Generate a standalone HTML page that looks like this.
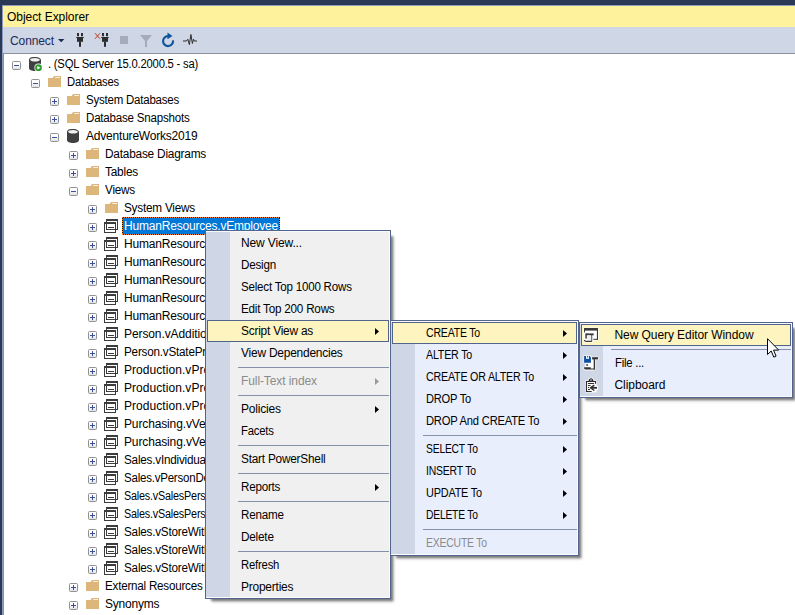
<!DOCTYPE html>
<html><head><meta charset="utf-8"><title>Object Explorer</title><style>
html,body{margin:0;padding:0;width:795px;height:615px;overflow:hidden;background:#fff}
body{position:relative;font-family:"Liberation Sans", sans-serif;font-size:12px}
body>div,body>span,body>svg{position:absolute;display:block}
.t{white-space:pre;line-height:18px;height:18px;transform-origin:0 0}
.menu{box-shadow:4px 4px 2px -2px rgba(0,0,0,0.4), 5px 5px 3px -2px rgba(0,0,0,0.2)}
</style></head>
<body>
<div style="left:0px;top:0px;width:795px;height:5px;background:#293955;"></div>
<div style="left:0px;top:0px;width:2px;height:615px;background:#293955;"></div>
<div style="left:2px;top:5px;width:1px;height:610px;background:#8e9bbc;"></div>
<div style="left:2px;top:5px;width:793px;height:1px;background:#8e9bbc;"></div>
<div style="left:3px;top:6px;width:792px;height:21px;background:#fff29d;"></div>
<div style="left:3px;top:27px;width:792px;height:26px;background:#cfd6e5;"></div>
<div style="left:3px;top:53px;width:792px;height:1px;background:#8c909c;"></div>
<div style="left:3px;top:53px;width:1px;height:562px;background:#8c909c;"></div>
<span class="t" style="left:7px;top:8px;color:#000;font-size:12px;letter-spacing:-0.047px;">Object Explorer</span>
<span class="t" style="left:10px;top:32px;color:#1b2a5c;font-size:12px;letter-spacing:-0.100px;">Connect</span>
<svg style="left:56px;top:27px" width="150" height="26" viewBox="0 0 150 26"><path d="M2 12h6.400l-3.200 3.200z" fill="#1b2a4c"/><g fill="#2d2d2d" transform="translate(0 0)"><rect x="21" y="6" width="2" height="3.200"/><rect x="25" y="6" width="2" height="3.200"/><path d="M20 11l0.500-1h7l0.500 1z"/><rect x="21" y="11" width="6" height="3.800"/><rect x="23" y="14.500" width="2" height="5.300"/></g><g fill="#2d2d2d" transform="translate(25 0)"><rect x="21" y="6" width="2" height="3.200"/><rect x="25" y="6" width="2" height="3.200"/><path d="M20 11l0.500-1h7l0.500 1z"/><rect x="21" y="11" width="6" height="3.800"/><rect x="23" y="14.500" width="2" height="5.300"/></g><path d="M39 6.200l5 5.600M44 6.200l-5 5.600" stroke="#c2391d" stroke-width="1" fill="none"/><rect x="64" y="9" width="8" height="8" fill="#a6abba"/><path d="M84 8h12l-5 6v6h-2v-6z" fill="#a6abba"/><path d="M112 9.100A5 5 0 1 0 117 13.300" stroke="#0e569c" stroke-width="2.100" fill="none"/><path d="M111.500 5.400l5 3.700l-5 3.200z" fill="#0e569c"/><path d="M127 14h3.500l1.300-1.800l1.600 5.400l1.500-10.100l1.500 9l1.100-4.300l0.900 1.800h2.600" stroke="#2d2d2d" stroke-width="1" fill="none"/></svg>
<div id="tree" style="left:4px;top:54px;width:791px;height:561px;overflow:hidden;background:#fff"></div>
<svg class="i" style="left:12px;top:61px" width="9" height="9" viewBox="0 0 9 9"><rect x="0.500" y="0.500" width="8" height="8" rx="1" fill="#fdfdfd" stroke="#919191"/><rect x="1" y="5" width="7" height="1.500" fill="#efefef"/><rect x="1" y="6.500" width="7" height="1.500" fill="#e3e3e3"/><path d="M2 4.500h5" stroke="#3b4f9e" stroke-width="1"/></svg>
<svg class="i" style="left:29px;top:57px" width="16" height="15" viewBox="0 0 16 15"><path d="M0 2.800v8.400c0 1.500 2.700 2.800 6 2.800s6-1.300 6-2.800v-8.400z" fill="#404040"/><ellipse cx="6" cy="2.800" rx="5.400" ry="2.300" fill="#f2f2f2" stroke="#404040" stroke-width="1.100"/><circle cx="9.500" cy="10.700" r="4.100" fill="#fff"/><circle cx="9.500" cy="10.700" r="3.400" fill="#2f9a2f"/><path d="M8.300 8.900l3.200 1.800l-3.200 1.800z" fill="#fff"/></svg>
<span class="t" style="left:48px;top:55px;color:#000;font-size:12px;letter-spacing:-0.220px;transform:scaleX(0.9366);">. (SQL Server 15.0.2000.5 - sa)</span>
<svg class="i" style="left:31px;top:79px" width="9" height="9" viewBox="0 0 9 9"><rect x="0.500" y="0.500" width="8" height="8" rx="1" fill="#fdfdfd" stroke="#919191"/><rect x="1" y="5" width="7" height="1.500" fill="#efefef"/><rect x="1" y="6.500" width="7" height="1.500" fill="#e3e3e3"/><path d="M2 4.500h5" stroke="#3b4f9e" stroke-width="1"/></svg>
<svg class="i" style="left:48px;top:76px" width="13" height="11" viewBox="0 0 13 11"><path d="M0 2h4.500l1.500-2h7v11h-13z" fill="#dcb67a"/><path d="M6.700 2l0.800-1h4.500v1z" fill="#f8efdc"/></svg>
<span class="t" style="left:67px;top:73px;color:#000;font-size:12px;letter-spacing:-0.220px;transform:scaleX(0.9387);">Databases</span>
<svg class="i" style="left:50px;top:97px" width="9" height="9" viewBox="0 0 9 9"><rect x="0.500" y="0.500" width="8" height="8" rx="1" fill="#fdfdfd" stroke="#919191"/><rect x="1" y="5" width="7" height="1.500" fill="#efefef"/><rect x="1" y="6.500" width="7" height="1.500" fill="#e3e3e3"/><path d="M2 4.500h5" stroke="#3b4f9e" stroke-width="1"/><path d="M4.500 2v5" stroke="#3b4f9e" stroke-width="1"/></svg>
<svg class="i" style="left:67px;top:94px" width="13" height="11" viewBox="0 0 13 11"><path d="M0 2h4.500l1.500-2h7v11h-13z" fill="#dcb67a"/><path d="M6.700 2l0.800-1h4.500v1z" fill="#f8efdc"/></svg>
<span class="t" style="left:86px;top:91px;color:#000;font-size:12px;letter-spacing:-0.220px;transform:scaleX(0.9568);">System Databases</span>
<svg class="i" style="left:50px;top:115px" width="9" height="9" viewBox="0 0 9 9"><rect x="0.500" y="0.500" width="8" height="8" rx="1" fill="#fdfdfd" stroke="#919191"/><rect x="1" y="5" width="7" height="1.500" fill="#efefef"/><rect x="1" y="6.500" width="7" height="1.500" fill="#e3e3e3"/><path d="M2 4.500h5" stroke="#3b4f9e" stroke-width="1"/><path d="M4.500 2v5" stroke="#3b4f9e" stroke-width="1"/></svg>
<svg class="i" style="left:67px;top:112px" width="13" height="11" viewBox="0 0 13 11"><path d="M0 2h4.500l1.500-2h7v11h-13z" fill="#dcb67a"/><path d="M6.700 2l0.800-1h4.500v1z" fill="#f8efdc"/></svg>
<span class="t" style="left:86px;top:109px;color:#000;font-size:12px;letter-spacing:-0.220px;transform:scaleX(0.9631);">Database Snapshots</span>
<svg class="i" style="left:50px;top:133px" width="9" height="9" viewBox="0 0 9 9"><rect x="0.500" y="0.500" width="8" height="8" rx="1" fill="#fdfdfd" stroke="#919191"/><rect x="1" y="5" width="7" height="1.500" fill="#efefef"/><rect x="1" y="6.500" width="7" height="1.500" fill="#e3e3e3"/><path d="M2 4.500h5" stroke="#3b4f9e" stroke-width="1"/></svg>
<svg class="i" style="left:67px;top:129px" width="12" height="14" viewBox="0 0 12 14"><path d="M0 2.800v8.400c0 1.500 2.700 2.800 6 2.800s6-1.300 6-2.800v-8.400z" fill="#404040"/><ellipse cx="6" cy="2.800" rx="5.400" ry="2.300" fill="#f2f2f2" stroke="#404040" stroke-width="1.100"/></svg>
<span class="t" style="left:86px;top:127px;color:#000;font-size:12px;letter-spacing:-0.205px;">AdventureWorks2019</span>
<svg class="i" style="left:69px;top:151px" width="9" height="9" viewBox="0 0 9 9"><rect x="0.500" y="0.500" width="8" height="8" rx="1" fill="#fdfdfd" stroke="#919191"/><rect x="1" y="5" width="7" height="1.500" fill="#efefef"/><rect x="1" y="6.500" width="7" height="1.500" fill="#e3e3e3"/><path d="M2 4.500h5" stroke="#3b4f9e" stroke-width="1"/><path d="M4.500 2v5" stroke="#3b4f9e" stroke-width="1"/></svg>
<svg class="i" style="left:86px;top:148px" width="13" height="11" viewBox="0 0 13 11"><path d="M0 2h4.500l1.500-2h7v11h-13z" fill="#dcb67a"/><path d="M6.700 2l0.800-1h4.500v1z" fill="#f8efdc"/></svg>
<span class="t" style="left:105px;top:145px;color:#000;font-size:12px;letter-spacing:-0.220px;transform:scaleX(0.9871);">Database Diagrams</span>
<svg class="i" style="left:69px;top:169px" width="9" height="9" viewBox="0 0 9 9"><rect x="0.500" y="0.500" width="8" height="8" rx="1" fill="#fdfdfd" stroke="#919191"/><rect x="1" y="5" width="7" height="1.500" fill="#efefef"/><rect x="1" y="6.500" width="7" height="1.500" fill="#e3e3e3"/><path d="M2 4.500h5" stroke="#3b4f9e" stroke-width="1"/><path d="M4.500 2v5" stroke="#3b4f9e" stroke-width="1"/></svg>
<svg class="i" style="left:86px;top:166px" width="13" height="11" viewBox="0 0 13 11"><path d="M0 2h4.500l1.500-2h7v11h-13z" fill="#dcb67a"/><path d="M6.700 2l0.800-1h4.500v1z" fill="#f8efdc"/></svg>
<span class="t" style="left:105px;top:163px;color:#000;font-size:12px;letter-spacing:-0.220px;transform:scaleX(0.9890);">Tables</span>
<svg class="i" style="left:69px;top:187px" width="9" height="9" viewBox="0 0 9 9"><rect x="0.500" y="0.500" width="8" height="8" rx="1" fill="#fdfdfd" stroke="#919191"/><rect x="1" y="5" width="7" height="1.500" fill="#efefef"/><rect x="1" y="6.500" width="7" height="1.500" fill="#e3e3e3"/><path d="M2 4.500h5" stroke="#3b4f9e" stroke-width="1"/></svg>
<svg class="i" style="left:86px;top:184px" width="13" height="11" viewBox="0 0 13 11"><path d="M0 2h4.500l1.500-2h7v11h-13z" fill="#dcb67a"/><path d="M6.700 2l0.800-1h4.500v1z" fill="#f8efdc"/></svg>
<span class="t" style="left:105px;top:181px;color:#000;font-size:12px;letter-spacing:-0.220px;transform:scaleX(0.9773);">Views</span>
<svg class="i" style="left:88px;top:205px" width="9" height="9" viewBox="0 0 9 9"><rect x="0.500" y="0.500" width="8" height="8" rx="1" fill="#fdfdfd" stroke="#919191"/><rect x="1" y="5" width="7" height="1.500" fill="#efefef"/><rect x="1" y="6.500" width="7" height="1.500" fill="#e3e3e3"/><path d="M2 4.500h5" stroke="#3b4f9e" stroke-width="1"/><path d="M4.500 2v5" stroke="#3b4f9e" stroke-width="1"/></svg>
<svg class="i" style="left:105px;top:202px" width="13" height="11" viewBox="0 0 13 11"><path d="M0 2h4.500l1.500-2h7v11h-13z" fill="#dcb67a"/><path d="M6.700 2l0.800-1h4.500v1z" fill="#f8efdc"/></svg>
<span class="t" style="left:124px;top:199px;color:#000;font-size:12px;letter-spacing:-0.220px;transform:scaleX(0.9793);">System Views</span>
<svg class="i" style="left:88px;top:223px" width="9" height="9" viewBox="0 0 9 9"><rect x="0.500" y="0.500" width="8" height="8" rx="1" fill="#fdfdfd" stroke="#919191"/><rect x="1" y="5" width="7" height="1.500" fill="#efefef"/><rect x="1" y="6.500" width="7" height="1.500" fill="#e3e3e3"/><path d="M2 4.500h5" stroke="#3b4f9e" stroke-width="1"/><path d="M4.500 2v5" stroke="#3b4f9e" stroke-width="1"/></svg>
<svg class="i" style="left:104px;top:219px" width="14" height="14" viewBox="0 0 14 14"><g fill="none" stroke="#3c3c3c" stroke-width="1"><rect x="2.500" y="0.500" width="11" height="10"/><path d="M2 1.500h12"/><rect x="0.500" y="3.500" width="11" height="10"/><path d="M0 4.500h12"/><path d="M4 8.500h6"/></g></svg>
<div style="left:122px;top:217px;width:158px;height:18px;background:repeating-linear-gradient(90deg,#ff8a2a 0 1px,#101010 1px 2px) 0 0/100% 1px no-repeat,repeating-linear-gradient(90deg,#ff8a2a 0 1px,#101010 1px 2px) 0 100%/100% 1px no-repeat,repeating-linear-gradient(180deg,#ff8a2a 0 1px,#101010 1px 2px) 0 0/1px 100% no-repeat,repeating-linear-gradient(180deg,#ff8a2a 0 1px,#101010 1px 2px) 100% 0/1px 100% no-repeat,#0078d7;"></div>
<span class="t" style="left:124px;top:217px;color:#fff;font-size:12px;letter-spacing:-0.198px;">HumanResources.vEmployee</span>
<svg class="i" style="left:88px;top:241px" width="9" height="9" viewBox="0 0 9 9"><rect x="0.500" y="0.500" width="8" height="8" rx="1" fill="#fdfdfd" stroke="#919191"/><rect x="1" y="5" width="7" height="1.500" fill="#efefef"/><rect x="1" y="6.500" width="7" height="1.500" fill="#e3e3e3"/><path d="M2 4.500h5" stroke="#3b4f9e" stroke-width="1"/><path d="M4.500 2v5" stroke="#3b4f9e" stroke-width="1"/></svg>
<svg class="i" style="left:104px;top:237px" width="14" height="14" viewBox="0 0 14 14"><g fill="none" stroke="#3c3c3c" stroke-width="1"><rect x="2.500" y="0.500" width="11" height="10"/><path d="M2 1.500h12"/><rect x="0.500" y="3.500" width="11" height="10"/><path d="M0 4.500h12"/><path d="M4 8.500h6"/></g></svg>
<span class="t" style="left:124px;top:235px;color:#000;font-size:12px;letter-spacing:-0.198px;">HumanResources.vEmployeeDepartment</span>
<svg class="i" style="left:88px;top:259px" width="9" height="9" viewBox="0 0 9 9"><rect x="0.500" y="0.500" width="8" height="8" rx="1" fill="#fdfdfd" stroke="#919191"/><rect x="1" y="5" width="7" height="1.500" fill="#efefef"/><rect x="1" y="6.500" width="7" height="1.500" fill="#e3e3e3"/><path d="M2 4.500h5" stroke="#3b4f9e" stroke-width="1"/><path d="M4.500 2v5" stroke="#3b4f9e" stroke-width="1"/></svg>
<svg class="i" style="left:104px;top:255px" width="14" height="14" viewBox="0 0 14 14"><g fill="none" stroke="#3c3c3c" stroke-width="1"><rect x="2.500" y="0.500" width="11" height="10"/><path d="M2 1.500h12"/><rect x="0.500" y="3.500" width="11" height="10"/><path d="M0 4.500h12"/><path d="M4 8.500h6"/></g></svg>
<span class="t" style="left:124px;top:253px;color:#000;font-size:12px;letter-spacing:-0.198px;">HumanResources.vEmployeeDepartmentHistory</span>
<svg class="i" style="left:88px;top:277px" width="9" height="9" viewBox="0 0 9 9"><rect x="0.500" y="0.500" width="8" height="8" rx="1" fill="#fdfdfd" stroke="#919191"/><rect x="1" y="5" width="7" height="1.500" fill="#efefef"/><rect x="1" y="6.500" width="7" height="1.500" fill="#e3e3e3"/><path d="M2 4.500h5" stroke="#3b4f9e" stroke-width="1"/><path d="M4.500 2v5" stroke="#3b4f9e" stroke-width="1"/></svg>
<svg class="i" style="left:104px;top:273px" width="14" height="14" viewBox="0 0 14 14"><g fill="none" stroke="#3c3c3c" stroke-width="1"><rect x="2.500" y="0.500" width="11" height="10"/><path d="M2 1.500h12"/><rect x="0.500" y="3.500" width="11" height="10"/><path d="M0 4.500h12"/><path d="M4 8.500h6"/></g></svg>
<span class="t" style="left:124px;top:271px;color:#000;font-size:12px;letter-spacing:-0.198px;">HumanResources.vJobCandidate</span>
<svg class="i" style="left:88px;top:295px" width="9" height="9" viewBox="0 0 9 9"><rect x="0.500" y="0.500" width="8" height="8" rx="1" fill="#fdfdfd" stroke="#919191"/><rect x="1" y="5" width="7" height="1.500" fill="#efefef"/><rect x="1" y="6.500" width="7" height="1.500" fill="#e3e3e3"/><path d="M2 4.500h5" stroke="#3b4f9e" stroke-width="1"/><path d="M4.500 2v5" stroke="#3b4f9e" stroke-width="1"/></svg>
<svg class="i" style="left:104px;top:291px" width="14" height="14" viewBox="0 0 14 14"><g fill="none" stroke="#3c3c3c" stroke-width="1"><rect x="2.500" y="0.500" width="11" height="10"/><path d="M2 1.500h12"/><rect x="0.500" y="3.500" width="11" height="10"/><path d="M0 4.500h12"/><path d="M4 8.500h6"/></g></svg>
<span class="t" style="left:124px;top:289px;color:#000;font-size:12px;letter-spacing:-0.198px;">HumanResources.vJobCandidateEducation</span>
<svg class="i" style="left:88px;top:313px" width="9" height="9" viewBox="0 0 9 9"><rect x="0.500" y="0.500" width="8" height="8" rx="1" fill="#fdfdfd" stroke="#919191"/><rect x="1" y="5" width="7" height="1.500" fill="#efefef"/><rect x="1" y="6.500" width="7" height="1.500" fill="#e3e3e3"/><path d="M2 4.500h5" stroke="#3b4f9e" stroke-width="1"/><path d="M4.500 2v5" stroke="#3b4f9e" stroke-width="1"/></svg>
<svg class="i" style="left:104px;top:309px" width="14" height="14" viewBox="0 0 14 14"><g fill="none" stroke="#3c3c3c" stroke-width="1"><rect x="2.500" y="0.500" width="11" height="10"/><path d="M2 1.500h12"/><rect x="0.500" y="3.500" width="11" height="10"/><path d="M0 4.500h12"/><path d="M4 8.500h6"/></g></svg>
<span class="t" style="left:124px;top:307px;color:#000;font-size:12px;letter-spacing:-0.198px;">HumanResources.vJobCandidateEmployment</span>
<svg class="i" style="left:88px;top:331px" width="9" height="9" viewBox="0 0 9 9"><rect x="0.500" y="0.500" width="8" height="8" rx="1" fill="#fdfdfd" stroke="#919191"/><rect x="1" y="5" width="7" height="1.500" fill="#efefef"/><rect x="1" y="6.500" width="7" height="1.500" fill="#e3e3e3"/><path d="M2 4.500h5" stroke="#3b4f9e" stroke-width="1"/><path d="M4.500 2v5" stroke="#3b4f9e" stroke-width="1"/></svg>
<svg class="i" style="left:104px;top:327px" width="14" height="14" viewBox="0 0 14 14"><g fill="none" stroke="#3c3c3c" stroke-width="1"><rect x="2.500" y="0.500" width="11" height="10"/><path d="M2 1.500h12"/><rect x="0.500" y="3.500" width="11" height="10"/><path d="M0 4.500h12"/><path d="M4 8.500h6"/></g></svg>
<span class="t" style="left:124px;top:325px;color:#000;font-size:12px;letter-spacing:-0.098px;">Person.vAdditionalContactInfo</span>
<svg class="i" style="left:88px;top:349px" width="9" height="9" viewBox="0 0 9 9"><rect x="0.500" y="0.500" width="8" height="8" rx="1" fill="#fdfdfd" stroke="#919191"/><rect x="1" y="5" width="7" height="1.500" fill="#efefef"/><rect x="1" y="6.500" width="7" height="1.500" fill="#e3e3e3"/><path d="M2 4.500h5" stroke="#3b4f9e" stroke-width="1"/><path d="M4.500 2v5" stroke="#3b4f9e" stroke-width="1"/></svg>
<svg class="i" style="left:104px;top:345px" width="14" height="14" viewBox="0 0 14 14"><g fill="none" stroke="#3c3c3c" stroke-width="1"><rect x="2.500" y="0.500" width="11" height="10"/><path d="M2 1.500h12"/><rect x="0.500" y="3.500" width="11" height="10"/><path d="M0 4.500h12"/><path d="M4 8.500h6"/></g></svg>
<span class="t" style="left:124px;top:343px;color:#000;font-size:12px;letter-spacing:-0.220px;transform:scaleX(0.9750);">Person.vStateProvinceCountryRegion</span>
<svg class="i" style="left:88px;top:367px" width="9" height="9" viewBox="0 0 9 9"><rect x="0.500" y="0.500" width="8" height="8" rx="1" fill="#fdfdfd" stroke="#919191"/><rect x="1" y="5" width="7" height="1.500" fill="#efefef"/><rect x="1" y="6.500" width="7" height="1.500" fill="#e3e3e3"/><path d="M2 4.500h5" stroke="#3b4f9e" stroke-width="1"/><path d="M4.500 2v5" stroke="#3b4f9e" stroke-width="1"/></svg>
<svg class="i" style="left:104px;top:363px" width="14" height="14" viewBox="0 0 14 14"><g fill="none" stroke="#3c3c3c" stroke-width="1"><rect x="2.500" y="0.500" width="11" height="10"/><path d="M2 1.500h12"/><rect x="0.500" y="3.500" width="11" height="10"/><path d="M0 4.500h12"/><path d="M4 8.500h6"/></g></svg>
<span class="t" style="left:124px;top:361px;color:#000;font-size:12px;letter-spacing:0.057px;">Production.vProductAndDescription</span>
<svg class="i" style="left:88px;top:385px" width="9" height="9" viewBox="0 0 9 9"><rect x="0.500" y="0.500" width="8" height="8" rx="1" fill="#fdfdfd" stroke="#919191"/><rect x="1" y="5" width="7" height="1.500" fill="#efefef"/><rect x="1" y="6.500" width="7" height="1.500" fill="#e3e3e3"/><path d="M2 4.500h5" stroke="#3b4f9e" stroke-width="1"/><path d="M4.500 2v5" stroke="#3b4f9e" stroke-width="1"/></svg>
<svg class="i" style="left:104px;top:381px" width="14" height="14" viewBox="0 0 14 14"><g fill="none" stroke="#3c3c3c" stroke-width="1"><rect x="2.500" y="0.500" width="11" height="10"/><path d="M2 1.500h12"/><rect x="0.500" y="3.500" width="11" height="10"/><path d="M0 4.500h12"/><path d="M4 8.500h6"/></g></svg>
<span class="t" style="left:124px;top:379px;color:#000;font-size:12px;letter-spacing:0.057px;">Production.vProductModelCatalogDescription</span>
<svg class="i" style="left:88px;top:403px" width="9" height="9" viewBox="0 0 9 9"><rect x="0.500" y="0.500" width="8" height="8" rx="1" fill="#fdfdfd" stroke="#919191"/><rect x="1" y="5" width="7" height="1.500" fill="#efefef"/><rect x="1" y="6.500" width="7" height="1.500" fill="#e3e3e3"/><path d="M2 4.500h5" stroke="#3b4f9e" stroke-width="1"/><path d="M4.500 2v5" stroke="#3b4f9e" stroke-width="1"/></svg>
<svg class="i" style="left:104px;top:399px" width="14" height="14" viewBox="0 0 14 14"><g fill="none" stroke="#3c3c3c" stroke-width="1"><rect x="2.500" y="0.500" width="11" height="10"/><path d="M2 1.500h12"/><rect x="0.500" y="3.500" width="11" height="10"/><path d="M0 4.500h12"/><path d="M4 8.500h6"/></g></svg>
<span class="t" style="left:124px;top:397px;color:#000;font-size:12px;letter-spacing:0.057px;">Production.vProductModelInstructions</span>
<svg class="i" style="left:88px;top:421px" width="9" height="9" viewBox="0 0 9 9"><rect x="0.500" y="0.500" width="8" height="8" rx="1" fill="#fdfdfd" stroke="#919191"/><rect x="1" y="5" width="7" height="1.500" fill="#efefef"/><rect x="1" y="6.500" width="7" height="1.500" fill="#e3e3e3"/><path d="M2 4.500h5" stroke="#3b4f9e" stroke-width="1"/><path d="M4.500 2v5" stroke="#3b4f9e" stroke-width="1"/></svg>
<svg class="i" style="left:104px;top:417px" width="14" height="14" viewBox="0 0 14 14"><g fill="none" stroke="#3c3c3c" stroke-width="1"><rect x="2.500" y="0.500" width="11" height="10"/><path d="M2 1.500h12"/><rect x="0.500" y="3.500" width="11" height="10"/><path d="M0 4.500h12"/><path d="M4 8.500h6"/></g></svg>
<span class="t" style="left:124px;top:415px;color:#000;font-size:12px;letter-spacing:-0.135px;">Purchasing.vVendorWithAddresses</span>
<svg class="i" style="left:88px;top:439px" width="9" height="9" viewBox="0 0 9 9"><rect x="0.500" y="0.500" width="8" height="8" rx="1" fill="#fdfdfd" stroke="#919191"/><rect x="1" y="5" width="7" height="1.500" fill="#efefef"/><rect x="1" y="6.500" width="7" height="1.500" fill="#e3e3e3"/><path d="M2 4.500h5" stroke="#3b4f9e" stroke-width="1"/><path d="M4.500 2v5" stroke="#3b4f9e" stroke-width="1"/></svg>
<svg class="i" style="left:104px;top:435px" width="14" height="14" viewBox="0 0 14 14"><g fill="none" stroke="#3c3c3c" stroke-width="1"><rect x="2.500" y="0.500" width="11" height="10"/><path d="M2 1.500h12"/><rect x="0.500" y="3.500" width="11" height="10"/><path d="M0 4.500h12"/><path d="M4 8.500h6"/></g></svg>
<span class="t" style="left:124px;top:433px;color:#000;font-size:12px;letter-spacing:-0.135px;">Purchasing.vVendorWithContacts</span>
<svg class="i" style="left:88px;top:457px" width="9" height="9" viewBox="0 0 9 9"><rect x="0.500" y="0.500" width="8" height="8" rx="1" fill="#fdfdfd" stroke="#919191"/><rect x="1" y="5" width="7" height="1.500" fill="#efefef"/><rect x="1" y="6.500" width="7" height="1.500" fill="#e3e3e3"/><path d="M2 4.500h5" stroke="#3b4f9e" stroke-width="1"/><path d="M4.500 2v5" stroke="#3b4f9e" stroke-width="1"/></svg>
<svg class="i" style="left:104px;top:453px" width="14" height="14" viewBox="0 0 14 14"><g fill="none" stroke="#3c3c3c" stroke-width="1"><rect x="2.500" y="0.500" width="11" height="10"/><path d="M2 1.500h12"/><rect x="0.500" y="3.500" width="11" height="10"/><path d="M0 4.500h12"/><path d="M4 8.500h6"/></g></svg>
<span class="t" style="left:124px;top:451px;color:#000;font-size:12px;letter-spacing:-0.220px;transform:scaleX(0.9753);">Sales.vIndividualCustomer</span>
<svg class="i" style="left:88px;top:475px" width="9" height="9" viewBox="0 0 9 9"><rect x="0.500" y="0.500" width="8" height="8" rx="1" fill="#fdfdfd" stroke="#919191"/><rect x="1" y="5" width="7" height="1.500" fill="#efefef"/><rect x="1" y="6.500" width="7" height="1.500" fill="#e3e3e3"/><path d="M2 4.500h5" stroke="#3b4f9e" stroke-width="1"/><path d="M4.500 2v5" stroke="#3b4f9e" stroke-width="1"/></svg>
<svg class="i" style="left:104px;top:471px" width="14" height="14" viewBox="0 0 14 14"><g fill="none" stroke="#3c3c3c" stroke-width="1"><rect x="2.500" y="0.500" width="11" height="10"/><path d="M2 1.500h12"/><rect x="0.500" y="3.500" width="11" height="10"/><path d="M0 4.500h12"/><path d="M4 8.500h6"/></g></svg>
<span class="t" style="left:124px;top:469px;color:#000;font-size:12px;letter-spacing:-0.220px;transform:scaleX(0.9582);">Sales.vPersonDemographics</span>
<svg class="i" style="left:88px;top:493px" width="9" height="9" viewBox="0 0 9 9"><rect x="0.500" y="0.500" width="8" height="8" rx="1" fill="#fdfdfd" stroke="#919191"/><rect x="1" y="5" width="7" height="1.500" fill="#efefef"/><rect x="1" y="6.500" width="7" height="1.500" fill="#e3e3e3"/><path d="M2 4.500h5" stroke="#3b4f9e" stroke-width="1"/><path d="M4.500 2v5" stroke="#3b4f9e" stroke-width="1"/></svg>
<svg class="i" style="left:104px;top:489px" width="14" height="14" viewBox="0 0 14 14"><g fill="none" stroke="#3c3c3c" stroke-width="1"><rect x="2.500" y="0.500" width="11" height="10"/><path d="M2 1.500h12"/><rect x="0.500" y="3.500" width="11" height="10"/><path d="M0 4.500h12"/><path d="M4 8.500h6"/></g></svg>
<span class="t" style="left:124px;top:487px;color:#000;font-size:12px;letter-spacing:-0.220px;transform:scaleX(0.9003);">Sales.vSalesPerson</span>
<svg class="i" style="left:88px;top:511px" width="9" height="9" viewBox="0 0 9 9"><rect x="0.500" y="0.500" width="8" height="8" rx="1" fill="#fdfdfd" stroke="#919191"/><rect x="1" y="5" width="7" height="1.500" fill="#efefef"/><rect x="1" y="6.500" width="7" height="1.500" fill="#e3e3e3"/><path d="M2 4.500h5" stroke="#3b4f9e" stroke-width="1"/><path d="M4.500 2v5" stroke="#3b4f9e" stroke-width="1"/></svg>
<svg class="i" style="left:104px;top:507px" width="14" height="14" viewBox="0 0 14 14"><g fill="none" stroke="#3c3c3c" stroke-width="1"><rect x="2.500" y="0.500" width="11" height="10"/><path d="M2 1.500h12"/><rect x="0.500" y="3.500" width="11" height="10"/><path d="M0 4.500h12"/><path d="M4 8.500h6"/></g></svg>
<span class="t" style="left:124px;top:505px;color:#000;font-size:12px;letter-spacing:-0.220px;transform:scaleX(0.9003);">Sales.vSalesPersonSalesByFiscalYears</span>
<svg class="i" style="left:88px;top:529px" width="9" height="9" viewBox="0 0 9 9"><rect x="0.500" y="0.500" width="8" height="8" rx="1" fill="#fdfdfd" stroke="#919191"/><rect x="1" y="5" width="7" height="1.500" fill="#efefef"/><rect x="1" y="6.500" width="7" height="1.500" fill="#e3e3e3"/><path d="M2 4.500h5" stroke="#3b4f9e" stroke-width="1"/><path d="M4.500 2v5" stroke="#3b4f9e" stroke-width="1"/></svg>
<svg class="i" style="left:104px;top:525px" width="14" height="14" viewBox="0 0 14 14"><g fill="none" stroke="#3c3c3c" stroke-width="1"><rect x="2.500" y="0.500" width="11" height="10"/><path d="M2 1.500h12"/><rect x="0.500" y="3.500" width="11" height="10"/><path d="M0 4.500h12"/><path d="M4 8.500h6"/></g></svg>
<span class="t" style="left:124px;top:523px;color:#000;font-size:12px;letter-spacing:-0.220px;transform:scaleX(0.9749);">Sales.vStoreWithAddresses</span>
<svg class="i" style="left:88px;top:547px" width="9" height="9" viewBox="0 0 9 9"><rect x="0.500" y="0.500" width="8" height="8" rx="1" fill="#fdfdfd" stroke="#919191"/><rect x="1" y="5" width="7" height="1.500" fill="#efefef"/><rect x="1" y="6.500" width="7" height="1.500" fill="#e3e3e3"/><path d="M2 4.500h5" stroke="#3b4f9e" stroke-width="1"/><path d="M4.500 2v5" stroke="#3b4f9e" stroke-width="1"/></svg>
<svg class="i" style="left:104px;top:543px" width="14" height="14" viewBox="0 0 14 14"><g fill="none" stroke="#3c3c3c" stroke-width="1"><rect x="2.500" y="0.500" width="11" height="10"/><path d="M2 1.500h12"/><rect x="0.500" y="3.500" width="11" height="10"/><path d="M0 4.500h12"/><path d="M4 8.500h6"/></g></svg>
<span class="t" style="left:124px;top:541px;color:#000;font-size:12px;letter-spacing:-0.220px;transform:scaleX(0.9749);">Sales.vStoreWithContacts</span>
<svg class="i" style="left:88px;top:565px" width="9" height="9" viewBox="0 0 9 9"><rect x="0.500" y="0.500" width="8" height="8" rx="1" fill="#fdfdfd" stroke="#919191"/><rect x="1" y="5" width="7" height="1.500" fill="#efefef"/><rect x="1" y="6.500" width="7" height="1.500" fill="#e3e3e3"/><path d="M2 4.500h5" stroke="#3b4f9e" stroke-width="1"/><path d="M4.500 2v5" stroke="#3b4f9e" stroke-width="1"/></svg>
<svg class="i" style="left:104px;top:561px" width="14" height="14" viewBox="0 0 14 14"><g fill="none" stroke="#3c3c3c" stroke-width="1"><rect x="2.500" y="0.500" width="11" height="10"/><path d="M2 1.500h12"/><rect x="0.500" y="3.500" width="11" height="10"/><path d="M0 4.500h12"/><path d="M4 8.500h6"/></g></svg>
<span class="t" style="left:124px;top:559px;color:#000;font-size:12px;letter-spacing:-0.220px;transform:scaleX(0.9749);">Sales.vStoreWithDemographics</span>
<svg class="i" style="left:69px;top:583px" width="9" height="9" viewBox="0 0 9 9"><rect x="0.500" y="0.500" width="8" height="8" rx="1" fill="#fdfdfd" stroke="#919191"/><rect x="1" y="5" width="7" height="1.500" fill="#efefef"/><rect x="1" y="6.500" width="7" height="1.500" fill="#e3e3e3"/><path d="M2 4.500h5" stroke="#3b4f9e" stroke-width="1"/><path d="M4.500 2v5" stroke="#3b4f9e" stroke-width="1"/></svg>
<svg class="i" style="left:86px;top:580px" width="13" height="11" viewBox="0 0 13 11"><path d="M0 2h4.500l1.500-2h7v11h-13z" fill="#dcb67a"/><path d="M6.700 2l0.800-1h4.500v1z" fill="#f8efdc"/></svg>
<span class="t" style="left:105px;top:577px;color:#000;font-size:12px;letter-spacing:-0.220px;transform:scaleX(0.9677);">External Resources</span>
<svg class="i" style="left:69px;top:601px" width="9" height="9" viewBox="0 0 9 9"><rect x="0.500" y="0.500" width="8" height="8" rx="1" fill="#fdfdfd" stroke="#919191"/><rect x="1" y="5" width="7" height="1.500" fill="#efefef"/><rect x="1" y="6.500" width="7" height="1.500" fill="#e3e3e3"/><path d="M2 4.500h5" stroke="#3b4f9e" stroke-width="1"/><path d="M4.500 2v5" stroke="#3b4f9e" stroke-width="1"/></svg>
<svg class="i" style="left:86px;top:598px" width="13" height="11" viewBox="0 0 13 11"><path d="M0 2h4.500l1.500-2h7v11h-13z" fill="#dcb67a"/><path d="M6.700 2l0.800-1h4.500v1z" fill="#f8efdc"/></svg>
<span class="t" style="left:105px;top:595px;color:#000;font-size:12px;letter-spacing:-0.204px;">Synonyms</span>
<div class="menu" style="left:205px;top:230px;width:184px;height:367px;background:#f0f0f0;border:1px solid #52638c"></div>
<div style="left:206px;top:231px;width:184px;height:1px;background:#fafbfe;"></div>
<div style="left:389px;top:231px;width:1px;height:367px;background:#fafbfe;"></div>
<div style="left:206px;top:232px;width:24px;height:365px;background:#cfd6e5;"></div>
<div style="left:206px;top:597px;width:184px;height:1px;background:#fafbfe;"></div>
<div style="left:207px;top:320px;width:180px;height:20px;background:#fdf4bf;border:1px solid #52638c"></div>
<span class="t" style="left:241px;top:234px;color:#000;font-size:12px;letter-spacing:-0.135px;">New View...</span>
<span class="t" style="left:241px;top:256px;color:#000;font-size:12px;letter-spacing:-0.220px;transform:scaleX(0.9712);">Design</span>
<span class="t" style="left:241px;top:278px;color:#000;font-size:12px;letter-spacing:-0.220px;transform:scaleX(0.9644);">Select Top 1000 Rows</span>
<span class="t" style="left:241px;top:300px;color:#000;font-size:12px;letter-spacing:-0.220px;transform:scaleX(0.9729);">Edit Top 200 Rows</span>
<span class="t" style="left:241px;top:322px;color:#000;font-size:12px;letter-spacing:-0.220px;transform:scaleX(0.9899);">Script View as</span>
<svg class="i" style="left:375px;top:328px" width="4" height="7" viewBox="0 0 4 7"><path d="M0 0L4 3.500L0 7z" fill="#000"/></svg>
<span class="t" style="left:241px;top:344px;color:#000;font-size:12px;letter-spacing:-0.220px;transform:scaleX(0.9949);">View Dependencies</span>
<div style="left:238px;top:367px;width:151px;height:1px;background:#8591ab;"></div>
<span class="t" style="left:241px;top:372px;color:#8b8b8b;font-size:12px;letter-spacing:-0.092px;">Full-Text index</span>
<svg class="i" style="left:375px;top:378px" width="4" height="7" viewBox="0 0 4 7"><path d="M0 0L4 3.500L0 7z" fill="#9a9a9a"/></svg>
<div style="left:238px;top:395px;width:151px;height:1px;background:#8591ab;"></div>
<span class="t" style="left:241px;top:400px;color:#000;font-size:12px;letter-spacing:-0.207px;">Policies</span>
<svg class="i" style="left:375px;top:406px" width="4" height="7" viewBox="0 0 4 7"><path d="M0 0L4 3.500L0 7z" fill="#000"/></svg>
<span class="t" style="left:241px;top:422px;color:#000;font-size:12px;letter-spacing:-0.220px;transform:scaleX(0.9425);">Facets</span>
<div style="left:238px;top:445px;width:151px;height:1px;background:#8591ab;"></div>
<span class="t" style="left:241px;top:450px;color:#000;font-size:12px;letter-spacing:-0.220px;transform:scaleX(0.9842);">Start PowerShell</span>
<div style="left:238px;top:473px;width:151px;height:1px;background:#8591ab;"></div>
<span class="t" style="left:241px;top:478px;color:#000;font-size:12px;letter-spacing:-0.220px;transform:scaleX(0.9681);">Reports</span>
<svg class="i" style="left:375px;top:484px" width="4" height="7" viewBox="0 0 4 7"><path d="M0 0L4 3.500L0 7z" fill="#000"/></svg>
<div style="left:238px;top:501px;width:151px;height:1px;background:#8591ab;"></div>
<span class="t" style="left:241px;top:506px;color:#000;font-size:12px;letter-spacing:-0.220px;transform:scaleX(0.9696);">Rename</span>
<span class="t" style="left:241px;top:528px;color:#000;font-size:12px;letter-spacing:-0.220px;transform:scaleX(0.9800);">Delete</span>
<div style="left:238px;top:551px;width:151px;height:1px;background:#8591ab;"></div>
<span class="t" style="left:241px;top:556px;color:#000;font-size:12px;letter-spacing:-0.220px;transform:scaleX(0.9434);">Refresh</span>
<span class="t" style="left:241px;top:578px;color:#000;font-size:12px;letter-spacing:-0.220px;transform:scaleX(0.9961);">Properties</span>
<div class="menu" style="left:390px;top:320px;width:187px;height:234px;background:#e9eefd;border:1px solid #52638c"></div>
<div style="left:391px;top:321px;width:187px;height:1px;background:#fafbfe;"></div>
<div style="left:577px;top:321px;width:1px;height:234px;background:#fafbfe;"></div>
<div style="left:391px;top:322px;width:24px;height:232px;background:#cfd6e5;"></div>
<div style="left:391px;top:554px;width:187px;height:1px;background:#fafbfe;"></div>
<div style="left:392px;top:322px;width:183px;height:20px;background:#fdf4bf;border:1px solid #52638c"></div>
<span class="t" style="left:426px;top:324px;color:#000;font-size:12px;letter-spacing:-0.220px;transform:scaleX(0.8767);">CREATE To</span>
<svg class="i" style="left:563px;top:330px" width="4" height="7" viewBox="0 0 4 7"><path d="M0 0L4 3.500L0 7z" fill="#000"/></svg>
<span class="t" style="left:426px;top:346px;color:#000;font-size:12px;letter-spacing:-0.220px;transform:scaleX(0.8877);">ALTER To</span>
<svg class="i" style="left:563px;top:352px" width="4" height="7" viewBox="0 0 4 7"><path d="M0 0L4 3.500L0 7z" fill="#000"/></svg>
<span class="t" style="left:426px;top:368px;color:#000;font-size:12px;letter-spacing:-0.220px;transform:scaleX(0.8895);">CREATE OR ALTER To</span>
<svg class="i" style="left:563px;top:374px" width="4" height="7" viewBox="0 0 4 7"><path d="M0 0L4 3.500L0 7z" fill="#000"/></svg>
<span class="t" style="left:426px;top:390px;color:#000;font-size:12px;letter-spacing:-0.220px;transform:scaleX(0.9238);">DROP To</span>
<svg class="i" style="left:563px;top:396px" width="4" height="7" viewBox="0 0 4 7"><path d="M0 0L4 3.500L0 7z" fill="#000"/></svg>
<span class="t" style="left:426px;top:412px;color:#000;font-size:12px;letter-spacing:-0.220px;transform:scaleX(0.9322);">DROP And CREATE To</span>
<svg class="i" style="left:563px;top:418px" width="4" height="7" viewBox="0 0 4 7"><path d="M0 0L4 3.500L0 7z" fill="#000"/></svg>
<div style="left:423px;top:435px;width:154px;height:1px;background:#8591ab;"></div>
<span class="t" style="left:426px;top:440px;color:#000;font-size:12px;letter-spacing:-0.220px;transform:scaleX(0.8592);">SELECT To</span>
<svg class="i" style="left:563px;top:446px" width="4" height="7" viewBox="0 0 4 7"><path d="M0 0L4 3.500L0 7z" fill="#000"/></svg>
<span class="t" style="left:426px;top:462px;color:#000;font-size:12px;letter-spacing:-0.220px;transform:scaleX(0.8677);">INSERT To</span>
<svg class="i" style="left:563px;top:468px" width="4" height="7" viewBox="0 0 4 7"><path d="M0 0L4 3.500L0 7z" fill="#000"/></svg>
<span class="t" style="left:426px;top:484px;color:#000;font-size:12px;letter-spacing:-0.220px;transform:scaleX(0.9075);">UPDATE To</span>
<svg class="i" style="left:563px;top:490px" width="4" height="7" viewBox="0 0 4 7"><path d="M0 0L4 3.500L0 7z" fill="#000"/></svg>
<span class="t" style="left:426px;top:506px;color:#000;font-size:12px;letter-spacing:-0.220px;transform:scaleX(0.8561);">DELETE To</span>
<svg class="i" style="left:563px;top:512px" width="4" height="7" viewBox="0 0 4 7"><path d="M0 0L4 3.500L0 7z" fill="#000"/></svg>
<div style="left:423px;top:529px;width:154px;height:1px;background:#8591ab;"></div>
<span class="t" style="left:426px;top:534px;color:#8b8b8b;font-size:12px;letter-spacing:-0.220px;transform:scaleX(0.8667);">EXECUTE To</span>
<div class="menu" style="left:579px;top:322px;width:212px;height:74px;background:#e9eefd;border:1px solid #52638c"></div>
<div style="left:580px;top:323px;width:212px;height:1px;background:#fafbfe;"></div>
<div style="left:791px;top:323px;width:1px;height:74px;background:#fafbfe;"></div>
<div style="left:580px;top:324px;width:23px;height:72px;background:#cfd6e5;"></div>
<div style="left:580px;top:396px;width:212px;height:1px;background:#fafbfe;"></div>
<div style="left:581px;top:324px;width:208px;height:20px;background:#fdf4bf;border:1px solid #52638c"></div>
<div style="left:611px;top:349px;width:180px;height:1px;background:#8591ab;"></div>
<span class="t" style="left:614.5px;top:326px;color:#000;font-size:12px;letter-spacing:-0.075px;">New Query Editor Window</span>
<span class="t" style="left:614.5px;top:354px;color:#000;font-size:12px;letter-spacing:-0.220px;transform:scaleX(0.9382);">File ...</span>
<span class="t" style="left:614.5px;top:376px;color:#000;font-size:12px;letter-spacing:-0.064px;">Clipboard</span>
<svg class="i" style="left:583px;top:327px" width="16" height="16" viewBox="0 0 16 16"><path d="M0.500 0.500H15.600V13.400H9.800V15.400H0.500Z" fill="#fff"/><g fill="#3a3a3a"><rect x="1" y="1" width="14" height="2.600"/><rect x="1" y="1" width="1" height="4.400"/><rect x="13.900" y="1" width="1.100" height="11.800"/><rect x="10.300" y="11.800" width="4.700" height="1"/><rect x="2.900" y="6.400" width="7.800" height="1.900"/><rect x="2.300" y="6.500" width="1.500" height="5.100"/><rect x="8.300" y="8" width="0.900" height="6.400"/></g><rect x="4.500" y="8.300" width="3" height="5" fill="#ececec"/><path d="M1.200 13q0.500 1.400 2.200 1.400h5.400" stroke="#3a3a3a" stroke-width="1.200" fill="none"/></svg>
<svg class="i" style="left:583px;top:355px" width="16" height="16" viewBox="0 0 16 16"><path d="M0.500 0.500h7l1.300 1.200h6.700v3.200h-3v9.200l-1.200 1.300h-9.300l-1.500-1.500v-2.200h1.700v-3.400h-1.700z" fill="#fff" opacity="0.950"/><path d="M1.100 1.100h5.600l1.200 1.200v5.400h-6.800z" fill="#0b4ea2"/><rect x="3" y="1.100" width="3" height="2.700" fill="#fff"/><rect x="4.200" y="1.100" width="0.900" height="1.500" fill="#0b4ea2"/><g fill="#333"><rect x="9.100" y="2.200" width="5.900" height="2.200"/><rect x="10.700" y="4" width="1.300" height="10.400"/><rect x="3.200" y="9.300" width="1.800" height="1.400"/><path d="M1.100 12.200h6.600v1.200h4.300v1h-9.900l-1-1z"/></g></svg>
<svg class="i" style="left:583px;top:377px" width="16" height="16" viewBox="0 0 16 16"><path d="M2.500 3.500h2.300l1.200-2.800h4l1.200 2.800h2.300v5.200h1.500v4.300h-1.500v2.500h-11z" fill="#fff" opacity="0.950"/><path d="M12.500 6.700V4.500H3.500V14.500H8.700" stroke="#2d2d2d" stroke-width="1.100" fill="none"/><path d="M5.400 4.500C5.400 2.500 6.500 1.200 8 1.200S10.600 2.500 10.600 4.500z" fill="#2d2d2d"/><circle cx="8" cy="3" r="0.800" fill="#ddd"/><path d="M5 6.500h6M5 8.500h2.500M5 10.500h1M5 12.500h2" stroke="#2d2d2d" stroke-width="1" fill="none"/><path d="M8.500 10.800H14" stroke="#2d2d2d" stroke-width="1.800" fill="none"/><path d="M11.300 8.100L7.600 10.800L11.300 13.500" stroke="#2d2d2d" stroke-width="1.500" fill="none"/></svg>
<svg class="i" style="left:767px;top:338px" width="13" height="20" viewBox="0 0 13 20"><path d="M0.500 0.700v15.800l3.700-3.500l2.600 6.100l2.300-1l-2.600-6h5.200z" fill="#fff" stroke="#000" stroke-width="1"/></svg>
</body></html>
